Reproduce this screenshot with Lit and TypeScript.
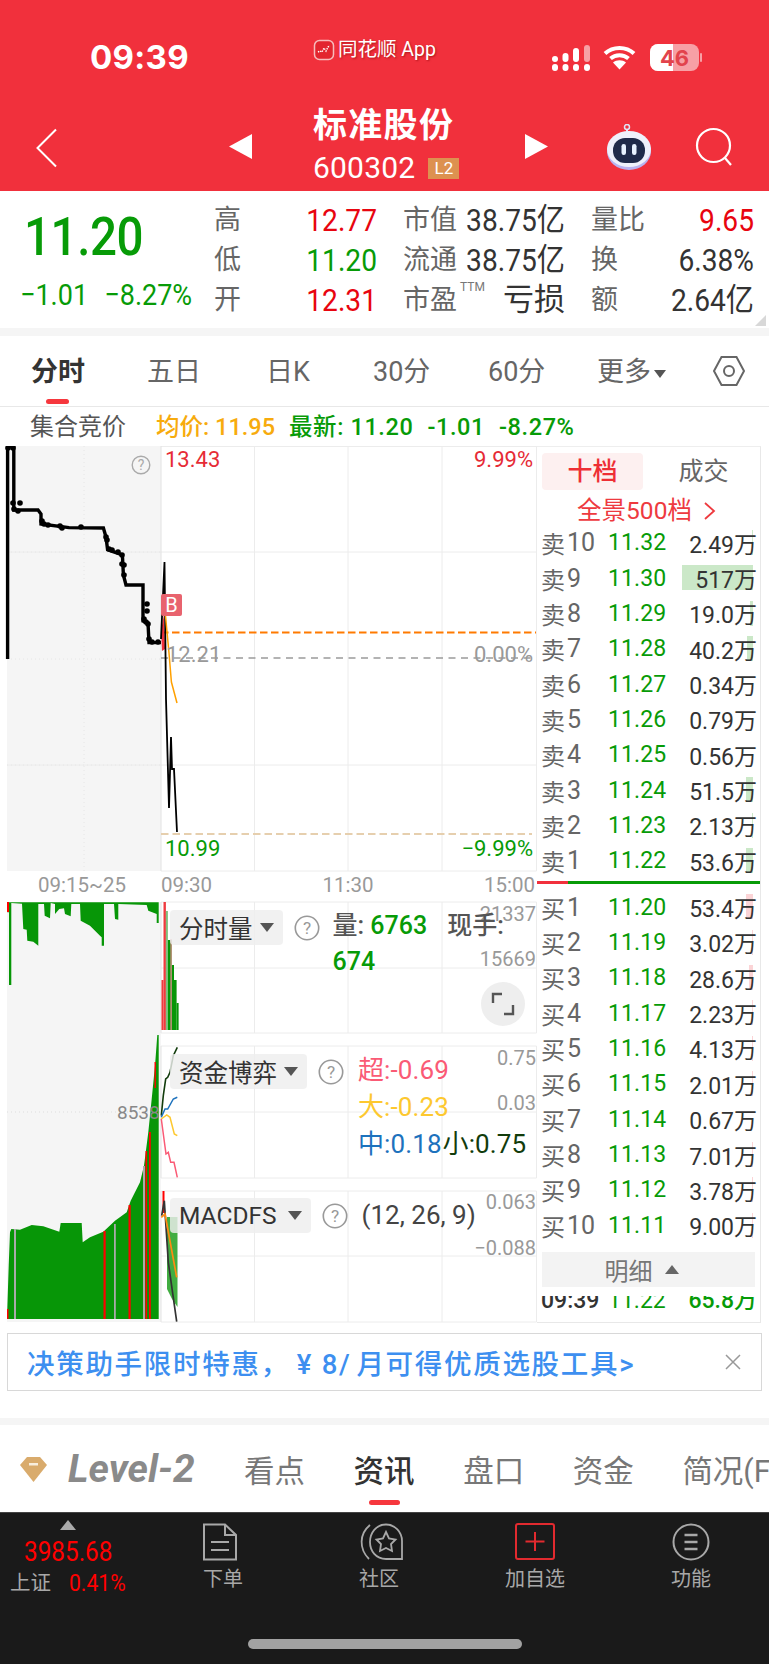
import { LitElement, html, css, svg } from "lit";
import { customElement } from "lit/decorators.js";

const pts = (a: number[][]) => a.map((p) => p.join(",")).join(" ");
const z7 = (x: number, y: number) => [+(x / 3).toFixed(1), +(y / 3 + 900).toFixed(1)];
const z7line = (a: number[][]) => pts(a.map((p) => z7(p[0], p[1])));

const hang = [[22,10],[22,40],[27,40],[27,258],[34,258],[34,12],[66,14],[70,90],[80,92],[82,125],[100,128],[115,140],[115,15],[132,15],[134,50],[150,58],[152,12],[165,15],[165,45],[178,30],[192,28],[195,45],[212,52],[214,15],[240,15],[242,65],[270,80],[300,110],[305,115],[305,140],[312,140],[312,15],[342,15],[345,60],[355,62],[355,15],[440,18],[445,35],[470,45],[470,72],[476,72],[476,10]];
const rise = [[22,1260],[22,1230],[26,1100],[30,1000],[34,990],[60,992],[95,978],[130,982],[178,998],[182,972],[245,972],[248,1030],[270,1015],[310,998],[345,965],[380,940],[392,905],[420,850],[432,800],[445,700],[455,600],[465,500],[472,408],[476,408],[476,1260]];
const blackAuction = [[7.6,660],[7.6,447],[13.8,447],[13.8,511],[38,511],[41,515],[41,525],[69,528.6],[103.4,529],[106,538],[107.6,550.7],[122.4,556],[123.4,576],[126,586],[143,586],[143,622],[148,624],[149,643.6],[161,643.6]];
const dots = [[8,449],[13,449],[13,504],[20,504],[14,510],[18,512],[42,522],[44,525],[48,526],[60,527],[62,529],[81,528],[106,538],[107,541],[109,550],[112,551],[118,553],[122,556],[122,565],[124,566],[124,576],[147,605],[147,612],[144,620],[146,623],[148,625],[149,640],[152,643],[158,643]];

const asks = [["10","11.32","2.49万",1.5],["9","11.30","517万",71],["8","11.29","19.0万",3],["7","11.28","40.2万",6],["6","11.27","0.34万",0],["5","11.26","0.79万",0],["4","11.25","0.56万",0],["3","11.24","51.5万",7],["2","11.23","2.13万",1],["1","11.22","53.6万",7]] as any[];
const bids = [["1","11.20","53.4万",7],["2","11.19","3.02万",1],["3","11.18","28.6万",4],["4","11.17","2.23万",1],["5","11.16","4.13万",1],["6","11.15","2.01万",1],["7","11.14","0.67万",0],["8","11.13","7.01万",1],["9","11.12","3.78万",1],["10","11.11","9.00万",1]] as any[];

const help = (s = 24) => html`<svg class="help" width=${s} height=${s} viewBox="0 0 24 24"><circle cx="12" cy="12" r="10.8" fill="none" stroke="#999" stroke-width="1.5"/><text x="12" y="17.5" text-anchor="middle" font-size="16" fill="#999" font-family="Roboto">?</text></svg>`;

@customElement("app-root")
export class AppRoot extends LitElement {
  static styles = css`
    :host { display: block; width: 769px; height: 1665px; overflow: hidden; background: #fff; font-family: Roboto, "Noto Sans CJK SC", sans-serif; color: #333; }
    svg { display: block; }
    .header { height: 191px; background: #f1303c; color: #fff; display: flex; flex-direction: column; }
    .status { height: 100px; display: flex; align-items: flex-start; }
    .time { margin: 37px 0 0 90px; width: 223px; font: 700 33px/40px Inter, Roboto, sans-serif; letter-spacing: 0.3px; }
    .appname { margin-top: 37px; width: 239px; display: flex; align-items: center; gap: 3px; font-size: 19.5px; line-height: 26px; text-shadow: 1px 1px 2px rgba(120,0,0,.55); }
    .sig { margin-top: 44px; display: flex; align-items: center; }
    .wifi { margin-left: 12px; }
    .battery { margin-left: 14px; }
    .nav { flex: 1; display: flex; align-items: flex-start; }
    .chev { margin: 28px 0 0 35px; }
    .tri-l { margin: 34px 0 0 170px; }
    .titlebox { margin-left: 61px; width: 212px; }
    .title { font-size: 34px; font-weight: 700; line-height: 48px; letter-spacing: 1.3px; margin-top: 1px; }
    .code { display: flex; align-items: center; gap: 13px; font-size: 30px; line-height: 34px; margin-top: 2px; letter-spacing: .2px; }
    .l2 { width: 31px; height: 21px; background: #dd9150; font-size: 17px; line-height: 21px; text-align: center; letter-spacing: 0; }
    .tri-r { margin: 34px 0 0 0; }
    .robot { margin: 24px 0 0 57px; }
    .search { margin: 27px 0 0 42px; }

    .stats { height: 137px; position: relative; display: flex; }
    .price { width: 214px; padding-left: 24px; box-sizing: border-box; }
    .big { font-size: 54px; line-height: 60px; color: #079b07; margin-top: 16px; transform: scaleX(.88); transform-origin: left; letter-spacing: -.5px; font-weight: 500; }
    .chg { display: flex; gap: 18px; margin: 11px 0 0 -4px; color: #079b07; font-size: 30px; line-height: 34px; transform: scaleX(.9); transform-origin: left; white-space: nowrap; }
    .grid { display: grid; grid-template-columns: 163px 26px 162px 26px 163px; grid-template-rows: repeat(3, 40px); margin-top: 9px; align-items: center; }
    .k { font-size: 27px; color: #666; white-space: nowrap; line-height: 40px; }
    .v { font-size: 32px; text-align: right; transform: scaleX(.88); transform-origin: right; line-height: 40px; white-space: nowrap; color: #333; }
    .red { color: #e8050f; } .grn { color: #079b07; }
    .lab { position: relative; }
    .ttm { font-size: 12px; color: #777; position: absolute; left: 57px; top: -3px; line-height: 20px; }
    .loss { font-size: 31px; color: #333; text-align: right; line-height: 38px; }
    .corner { position: absolute; right: 3px; bottom: 2px; width: 0; height: 0; border-left: 11px solid transparent; border-bottom: 11px solid #d8d8d8; }
    .strip { height: 8px; background: #f5f5f5; }
    .strip.b { height: 7px; }

    .tabs { height: 70px; border-bottom: 1px solid #e8e8e8; display: flex; position: relative; align-items: center; color: #666; font-size: 27px; }
    .tabs > div { position: absolute; top: 16px; line-height: 40px; white-space: nowrap; }
    .tabs .on { font-weight: 700; color: #333; }
    .ind { position: absolute; top: 63px; left: 46px; width: 23px; height: 5px; border-radius: 3px; background: #f6373d; }
    .more-caret { display: inline-block; margin-left: 3px; vertical-align: 3px; border: 6px solid transparent; border-top: 8px solid #555; border-bottom: 0; }
    .hex { position: absolute; left: 712px; top: 17px; }

    .quote { height: 39px; box-sizing: border-box; padding-top: 2px; display: flex; align-items: baseline; font-size: 23.5px; font-weight: 500; white-space: nowrap; line-height: 37px; }
    .quote .lbl { color: #555; font-size: 24px; font-weight: 400; margin: 0 30px 0 30px; }
    .quote .avg { color: #f7ab0d; margin-right: 14px; }
    .quote .last { color: #079b07; display: flex; align-items: baseline; gap: 14px; letter-spacing: .6px; }

    .main { display: flex; height: 878px; }
    .chart { width: 537px; position: relative; flex: none; }
    .chart svg.plot { position: absolute; left: 0; top: 0; }
    .indic { position: absolute; left: 170px; display: flex; align-items: flex-start; white-space: nowrap; }
    .pill { height: 35px; background: rgba(238,238,238,.82); border-radius: 4px; display: flex; align-items: center; gap: 7px; padding: 0 9px; font-size: 24.5px; color: #333; box-sizing: border-box; }
    .pill.m { gap: 11px; }
    .caret { display: inline-block; border: 7px solid transparent; border-top: 9px solid #555; border-bottom: 0; }
    .help { flex: none; }
    .indic .help { margin: 5px 13px 0 11px; }
    .read { font-size: 25px; line-height: 36px; font-weight: 500; }
    .vol { width: 195px; margin-top: -2px; white-space: normal; color: #555; display: flex; flex-wrap: wrap; column-gap: 20px; }
    .vol b { font-weight: 500; color: #079b07; }
    .fund { display: flex; flex-direction: column; font-size: 26px; line-height: 37px; margin-top: -2px; margin-left: 1px; letter-spacing: .1px; font-weight: 400; }
    .pk { color: #fa5a75; } .yl { color: #fdc82f; } .bl { color: #1d72bd; } .dg { color: #123c0c; margin-left: 1px; }
    .params { font-size: 26px; line-height: 35px; color: #444; margin-left: 1px; }
    .expand { position: absolute; left: 481px; top: 536px; width: 44px; height: 44px; border-radius: 50%; background: #eeeeee; display: flex; align-items: center; justify-content: center; }

    .book { width: 224px; box-sizing: border-box; border-right: 1px solid #e8e8e8; border-top: 1px solid #eee; border-bottom: 1px solid #e8e8e8; display: flex; flex-direction: column; flex: none; height: 877px; }
    .seg { display: flex; margin: 6px 0 0 5px; height: 37px; font-size: 25px; line-height: 37px; text-align: center; color: #666; }
    .seg .act { width: 101px; background: #fdf0f0; color: #ee2f35; border-radius: 4px; font-weight: 500; }
    .seg div:last-child { width: 101px; margin-left: 10px; }
    .pano { height: 35px; line-height: 44px; color: #ee3a3f; font-size: 24.5px; display: flex; justify-content: center; align-items: center; gap: 11px; padding: 6px 4px 0 0; box-sizing: border-box; }
    .row { height: 35.35px; position: relative; display: flex; align-items: center; font-size: 23px; white-space: nowrap; }
    .row .cn { padding-left: 4px; color: #666; font-size: 24px; width: 24px; box-sizing: content-box; flex: none; }
    .row .no { width: 43px; padding-left: 2px; box-sizing: border-box; color: #666; font-size: 25px; flex: none; }
    .row .px { width: 66px; color: #079b07; letter-spacing: .1px; }
    .row .qty { position: absolute; right: 3px; color: #333; z-index: 1; }
    .bar { position: absolute; right: 7px; top: 5px; height: 25px; }
    .bar.s { background: #cbe8c8; } .bar.b { background: #fbd4d6; }
    .split { height: 3px; margin: 3px 0 5px; background: #079b07; display: flex; }
    .split i { width: 31px; background: #f1303c; display: block; }
    .detail { margin: 9px 5px 0 5px; height: 35px; background: #f3f3f3; color: #777; font-size: 24px; display: flex; align-items: center; justify-content: center; gap: 12px; padding-right: 14px; }
    .detail i { border: 7px solid transparent; border-bottom: 9px solid #666; border-top: 0; display: block; }
    .clip { margin-top: 9px; height: 23px; overflow: hidden; position: relative; display: flex; font-size: 23px; line-height: 24px; white-space: nowrap; }
    .clip span { position: absolute; top: -7px; }
    .clip .t { left: 4px; color: #333; font-weight: 500; }
    .clip .p { left: 71px; color: #079b07; }
    .clip .q { right: 3px; color: #079b07; font-weight: 500; }

    .banner { margin: 9px 7px 0; height: 58px; box-sizing: border-box; border: 1px solid #d8d8d8; display: flex; align-items: center; justify-content: space-between; padding: 0 20px 0 19px; color: #3d8ff0; font-size: 27.5px; white-space: nowrap; font-weight: 500; letter-spacing: 1.7px; }
    .yen { margin: 0 5px 0 7px; }
    .gap { height: 27px; }
    .ltabs { height: 87px; position: relative; overflow: hidden; display: flex; align-items: center; font-size: 30.5px; color: #777; white-space: nowrap; }
    .diamond { margin-left: 20px; flex: none; }
    .lv { margin: 0 47px 0 21px; width: 129px; font-size: 39px; font-weight: 700; font-style: italic; color: #8a8a8a; flex: none; }
    .ltabs .t { width: 109.6px; flex: none; }
    .ltabs .on { color: #333; font-weight: 500; }
    .lind { position: absolute; left: 369px; top: 75px; width: 31px; height: 5px; border-radius: 3px; background: #f6373d; }

    .dock { height: 152px; background: #1a1a1a; border-top: 1px solid #444; box-sizing: border-box; position: relative; display: flex; color: #a8a8a8; }
    .idx { width: 145px; flex: none; display: flex; flex-direction: column; }
    .idx .up { margin: 7px 0 0 60px; width: 0; border: 8.5px solid transparent; border-bottom: 10px solid #aaa; border-top: 0; }
    .idx .n { color: #f00; font-size: 27px; line-height: 34px; margin: 5px 0 0 24px; transform: scaleX(.9); transform-origin: left; }
    .idx .s { display: flex; font-size: 20.5px; line-height: 30px; margin: -1px 0 0 10px; gap: 18px; }
    .idx .s b { color: #f00; font-weight: 400; font-size: 24px; transform: scaleX(.88); transform-origin: left; }
    .item { width: 156px; flex: none; display: flex; flex-direction: column; align-items: center; font-size: 20px; }
    .item svg { margin-top: 10px; }
    .item svg.doc { margin-right: 6px; }
    .item svg.com { margin-left: 5px; }
    .item span { line-height: 28px; margin-top: 4px; }
    .home { position: absolute; left: 248px; top: 126px; width: 274px; height: 10px; border-radius: 5px; background: #a2a2a2; }
  `;

  private plot() {
    const grid = "#ececec";
    const vs = [254.5, 348, 442];
    const panels = [[903, 969, 1034], [1047, 1113, 1179], [1192, 1257, 1323]];
    const label = (x: number, y: number, t: string, fill: string, anchor = "start", size = 22) =>
      svg`<text x=${x} y=${y} fill=${fill} text-anchor=${anchor} font-size=${size} font-family="Roboto, sans-serif">${t}</text>`;
    return svg`
      <svg class="plot" width="538" height="878" viewBox="0 447 538 878">
        <rect x="7" y="447" width="154" height="425" fill="#f5f5f5"/>
        <rect x="7" y="903" width="154" height="420" fill="#f5f5f5"/>
        <path d="M161 447.5H536.5V872H161M161 553H536.5M161 766H536.5M7 553H161M7 766H161" fill="none" stroke=${grid} stroke-width="1"/>
        <path d="M7 553H161M7 660H161M7 766H161M84 447V872" fill="none" stroke="#e6e6e6" stroke-dasharray="1 3"/>
        ${vs.map((x) => svg`<line x1=${x} x2=${x} y1="447" y2="872" stroke=${grid}/>`)}
        <line x1="161" x2="161" y1="447" y2="872" stroke="#e2e2e2"/>
        <line x1="536.5" x2="536.5" y1="447" y2="872" stroke=${grid}/>

        <line x1="161" x2="536" y1="659" y2="659" stroke="#9a9a9a" stroke-width="1.6" stroke-dasharray="7 5.5"/>
        <line x1="161" x2="536" y1="633.5" y2="633.5" stroke="#ff7a00" stroke-width="1.8" stroke-dasharray="7.5 3.5"/>
        <line x1="161" x2="532" y1="835" y2="835" stroke="#e6cfae" stroke-width="1.8" stroke-dasharray="7.5 4"/>

        <polyline points=${pts(blackAuction)} fill="none" stroke="#000" stroke-width="3.4"/>
        ${dots.map((d) => svg`<circle cx=${d[0]} cy=${d[1]} r="2.8" fill="#000"/>`)}
        <polygon points="161,632 164,615 165,650 162,652" fill="#f1303c"/>
        <polyline points="161,640 164.5,563 166,700 169,809 171,738 172,770 174,770 177,833" fill="none" stroke="#000" stroke-width="1.8"/>
        <polyline points="165.5,617 169,654 171.4,683 177,704" fill="none" stroke="#ffa000" stroke-width="1.5"/>
        <rect x="161" y="595" width="21" height="22" rx="2" fill="#e8636e"/>
        <text x="171.5" y="613" fill="#fff" text-anchor="middle" font-size="20" font-family="Roboto, sans-serif">B</text>

        ${label(165, 468, "13.43", "#e62b36")}
        ${label(533, 468, "9.99%", "#e62b36", "end")}
        ${label(166, 663, "12.21", "#999")}
        ${label(533, 663, "0.00%", "#999", "end")}
        ${label(165, 857, "10.99", "#079b07")}
        ${label(533, 857, "−9.99%", "#079b07", "end")}
        <g transform="translate(131 456)"><circle cx="10" cy="10" r="8.8" fill="none" stroke="#aaa" stroke-width="1.4"/><text x="10" y="15" text-anchor="middle" font-size="14" fill="#aaa" font-family="Roboto">?</text></g>

        ${label(38, 893, "09:15~25", "#999", "start", 20.5)}
        ${label(161, 893, "09:30", "#999", "start", 20.5)}
        ${label(348, 893, "11:30", "#999", "middle", 20.5)}
        ${label(535, 893, "15:00", "#999", "end", 20.5)}

        ${panels.map((p) => svg`
          <path d="M161 ${p[0]}H536.5V${p[2]}H161M161 ${p[1]}H536.5" fill="none" stroke=${grid}/>
          <line x1="161" x2="161" y1=${p[0]} y2=${p[2]} stroke="#e4e4e4"/>
          ${vs.map((x) => svg`<line x1=${x} x2=${x} y1=${p[0]} y2=${p[2]} stroke=${grid}/>`)}
        `)}
        <path d="M7 1113H161" stroke="#ddd" stroke-dasharray="1 3"/>

        <polygon points=${z7line(hang)} fill="#079607"/>
        <polygon points=${z7line(rise)} fill="#079607"/>
        <rect x="7" y="903" width="2" height="10" fill="#f00"/>
        <rect x="14" y="1230" width="2" height="90" fill="#aaa"/>
        <rect x="114" y="1225" width="1.8" height="95" fill="#aaa"/>
        <rect x="143" y="1167" width="2" height="153" fill="#aaa"/>
        <rect x="103.5" y="1232" width="2.2" height="88" fill="#f00"/>
        <rect x="128.5" y="1206" width="2.2" height="114" fill="#f00"/>
        <rect x="145.5" y="1152" width="1.6" height="168" fill="#f00"/>
        <rect x="149" y="1133" width="1.8" height="187" fill="#f00"/>
        <rect x="154.5" y="1063" width="1.4" height="26" fill="#f00"/>
        <rect x="7" y="1310" width="1.5" height="10" fill="#f00"/>

        <rect x="161.5" y="981" width="2" height="50" fill="#ef3a3f"/>
        <rect x="163.5" y="903" width="2.4" height="128" fill="#ef3a3f"/>
        <rect x="165.9" y="912" width="2" height="119" fill="#7fc07f"/>
        <rect x="167.9" y="941" width="3.8" height="90" fill="#079607"/>
        <rect x="171.7" y="966" width="2.3" height="65" fill="#079607"/>
        <rect x="170.4" y="940" width="1.3" height="91" fill="#d88"/>
        <rect x="174" y="981" width="2.6" height="50" fill="#079607"/>
        <rect x="176.6" y="1004" width="2" height="27" fill="#079607"/>

        <polyline points=${z7line([[484,650],[490,590],[497,540],[503,535],[510,520],[520,470],[532,445]])} fill="none" stroke="#123c0c" stroke-width="1.6"/>
        <polyline points=${z7line([[484,655],[495,630],[503,630],[520,600],[532,595]])} fill="none" stroke="#1d72bd" stroke-width="1.5"/>
        <polyline points=${z7line([[484,660],[500,648],[510,655],[523,705],[532,710]])} fill="none" stroke="#fdc82f" stroke-width="1.5"/>
        <polyline points=${z7line([[484,660],[498,765],[505,760],[512,790],[522,790],[532,835]])} fill="none" stroke="#fa5a75" stroke-width="1.5"/>

        <rect x="162.5" y="1192" width="2" height="22" fill="#f00"/>
        <polygon points="167,1218 177.5,1218 177.5,1308 172,1300 167,1290" fill="#41ad41"/>
        <polyline points=${z7line([[485,950],[493,905],[505,1090],[530,1268]])} fill="none" stroke="#333" stroke-width="1.7"/>
        <polyline points=${z7line([[484,955],[495,945],[530,1135]])} fill="none" stroke="#ff8a12" stroke-width="1.7"/>

        ${label(536, 922, "21337", "#999", "end", 20)}
        ${label(536, 967, "15669", "#999", "end", 20)}
        ${label(536, 1066, "0.75", "#999", "end", 20)}
        ${label(536, 1111, "0.03", "#999", "end", 20)}
        ${label(536, 1210, "0.063", "#999", "end", 20)}
        ${label(536, 1256, "−0.088", "#999", "end", 20)}
        ${label(117, 1120, "8538", "#888", "start", 19)}
      </svg>`;
  }

  private row(r: any[], cn: string) {
    const cls = cn === "卖" ? "s" : "b";
    return html`<div class="row">
      ${r[3] ? html`<i class="bar ${cls}" style="width:${r[3]}px"></i>` : ""}
      <span class="cn">${cn}</span><span class="no">${r[0]}</span><span class="px">${r[1]}</span><span class="qty">${r[2]}</span>
    </div>`;
  }

  render() {
    return html`
      <div class="header">
        <div class="status">
          <div class="time">09:39</div>
          <div class="appname">
            <svg width="22" height="22" viewBox="0 0 22 22"><rect x="1.5" y="1.5" width="19" height="19" rx="5" fill="#e3252f" stroke="#f6bcbc" stroke-width="1.5"/><path d="M5 13l2-1 2 1 2-4 2 3 2-4 2-1" fill="none" stroke="#fff" stroke-width="1.4" stroke-dasharray="1.4 1"/></svg>
            同花顺 App
          </div>
          <div class="sig">
            <svg width="39" height="26" viewBox="0 0 39 26" fill="#fff"><rect x="0" y="19" width="6" height="7" rx="3"/><rect x="10.5" y="19" width="6" height="7" rx="3"/><rect x="21" y="19" width="6" height="7" rx="3"/><rect x="32" y="19" width="6" height="7" rx="3"/><rect x="0" y="11" width="6" height="6" rx="3"/><rect x="10.5" y="8" width="6" height="9" rx="3"/><rect x="21" y="3" width="6" height="14" rx="3"/><rect x="32" y="0" width="6" height="17" rx="3" fill="#f7a0a5"/></svg>
            <svg class="wifi" width="33" height="25" viewBox="0 0 33 25"><path d="M2 8.5C10 1 23 1 31 8.5M7.5 13.5C12.5 9 20.5 9 25.5 13.5" fill="none" stroke="#fff" stroke-width="4"/><path d="M16.5 24.5L10 17.5C13.5 14.5 19.5 14.5 23 17.5Z" fill="#fff"/></svg>
            <svg class="battery" width="52" height="27" viewBox="0 0 52 27"><rect x="0" y="0" width="49" height="27" rx="8" fill="#f7a0a5"/><path d="M8 0H23V27H8A8 8 0 0 1 0 19V8A8 8 0 0 1 8 0Z" fill="#fff"/><rect x="50" y="9" width="2" height="9" rx="1" fill="#f7a0a5"/><text x="24.5" y="21.5" text-anchor="middle" font-size="22" font-weight="700" fill="#e2434c" font-family="Inter, Roboto, sans-serif">46</text></svg>
          </div>
        </div>
        <div class="nav">
          <svg class="chev" width="24" height="40" viewBox="0 0 24 40"><path d="M21 1.5L2.5 20L21 38.5" fill="none" stroke="#fff" stroke-width="2"/></svg>
          <svg class="tri-l" width="23" height="25" viewBox="0 0 23 25"><path d="M23 0V25L0 12.5Z" fill="#fff"/></svg>
          <div class="titlebox">
            <div class="title">标准股份</div>
            <div class="code">600302<div class="l2">L2</div></div>
          </div>
          <svg class="tri-r" width="23" height="25" viewBox="0 0 23 25"><path d="M0 0V25L23 12.5Z" fill="#fff"/></svg>
          <svg class="robot" width="48" height="46" viewBox="0 0 48 46"><circle cx="22" cy="3" r="2.5" fill="none" stroke="#dfe3f5" stroke-width="1.5"/><path d="M22 5V9" stroke="#dfe3f5" stroke-width="2"/><ellipse cx="24" cy="27" rx="22" ry="19" fill="#b9b3f0"/><ellipse cx="24" cy="25" rx="22" ry="18" fill="#eef0fb"/><rect x="8" y="14" width="32" height="25" rx="12" fill="#1f2a4a"/><rect x="16.5" y="20" width="4.5" height="11" rx="2.2" fill="#e8f2ff"/><rect x="27" y="20" width="4.5" height="11" rx="2.2" fill="#e8f2ff"/></svg>
          <svg class="search" width="40" height="40" viewBox="0 0 40 40"><circle cx="18.5" cy="18.5" r="16.5" fill="none" stroke="#fff" stroke-width="2.2"/><path d="M30 31l6 7" stroke="#fff" stroke-width="2.2"/></svg>
        </div>
      </div>

      <div class="stats">
        <div class="price">
          <div class="big">11.20</div>
          <div class="chg"><span>−1.01</span><span>−8.27%</span></div>
        </div>
        <div class="grid">
          <div class="k" style="grid-column:1;grid-row:1">高</div><div class="v red" style="grid-column:1;grid-row:1">12.77</div>
          <div class="k" style="grid-column:3;grid-row:1">市值</div><div class="v" style="grid-column:3;grid-row:1">38.75亿</div>
          <div class="k" style="grid-column:5;grid-row:1">量比</div><div class="v red" style="grid-column:5;grid-row:1">9.65</div>

          <div class="k" style="grid-column:1;grid-row:2">低</div><div class="v grn" style="grid-column:1;grid-row:2">11.20</div>
          <div class="k" style="grid-column:3;grid-row:2">流通</div><div class="v" style="grid-column:3;grid-row:2">38.75亿</div>
          <div class="k" style="grid-column:5;grid-row:2">换</div><div class="v" style="grid-column:5;grid-row:2">6.38%</div>

          <div class="k" style="grid-column:1;grid-row:3">开</div><div class="v red" style="grid-column:1;grid-row:3">12.31</div>
          <div class="k lab" style="grid-column:3;grid-row:3">市盈<span class="ttm">TTM</span></div><div class="loss" style="grid-column:3;grid-row:3">亏损</div>
          <div class="k" style="grid-column:5;grid-row:3">额</div><div class="v" style="grid-column:5;grid-row:3">2.64亿</div>
        </div>
        <div class="corner"></div>
      </div>
      <div class="strip"></div>

      <div class="tabs">
        <div class="on" style="left:31px">分时</div>
        <div style="left:147px">五日</div>
        <div style="left:266px">日K</div>
        <div style="left:373px">30分</div>
        <div style="left:488px">60分</div>
        <div style="left:597px">更多<i class="more-caret"></i></div>
        <svg class="hex" width="34" height="36" viewBox="0 0 34 36"><path d="M9.5 4H24.5L32 18L24.5 32H9.5L2 18Z" fill="none" stroke="#666" stroke-width="2"/><circle cx="17" cy="18" r="5" fill="none" stroke="#666" stroke-width="2"/></svg>
        <span class="ind"></span>
      </div>

      <div class="quote">
        <span class="lbl">集合竞价</span>
        <span class="avg">均价: 11.95</span>
        <span class="last"><span>最新: 11.20</span><span>-1.01</span><span>-8.27%</span></span>
      </div>

      <div class="main">
        <div class="chart">
          ${this.plot()}
          <div class="indic" style="top:464px">
            <div class="pill">分时量<i class="caret"></i></div>${help(26)}
            <div class="read vol"><span>量: <b>6763</b></span><span>现手:</span><b>674</b></div>
          </div>
          <div class="indic" style="top:608px">
            <div class="pill">资金博弈<i class="caret"></i></div>${help(26)}
            <div class="read fund">
              <span class="pk">超:-0.69</span><span class="yl">大:-0.23</span><span><span class="bl">中:0.18</span><span class="dg">小:0.75</span></span>
            </div>
          </div>
          <div class="indic" style="top:752px">
            <div class="pill m">MACDFS<i class="caret"></i></div>${help(26)}
            <div class="params">(12, 26, 9)</div>
          </div>
          <div class="expand"><svg width="24" height="24" viewBox="0 0 24 24"><path d="M2 11V2H11M22 13V22H13" fill="none" stroke="#555" stroke-width="2.4"/></svg></div>
        </div>

        <div class="book">
          <div class="seg"><div class="act">十档</div><div>成交</div></div>
          <div class="pano">全景500档 <svg width="13" height="20" viewBox="0 0 13 20"><path d="M2 2L11 10L2 18" fill="none" stroke="#ee3a3f" stroke-width="1.8"/></svg></div>
          ${asks.map((r) => this.row(r, "卖"))}
          <div class="split"><i></i></div>
          ${bids.map((r) => this.row(r, "买"))}
          <div class="detail">明细<i></i></div>
          <div class="clip"><span class="t">09:39</span><span class="p">11.22</span><span class="q">65.8万</span></div>
        </div>
      </div>

      <div class="banner"><span>决策助手限时特惠，<span class="yen">¥ 8/</span>月可得优质选股工具&gt;</span>
        <svg width="16" height="16" viewBox="0 0 16 16"><path d="M1 1L15 15M15 1L1 15" stroke="#999" stroke-width="1.5"/></svg>
      </div>
      <div class="gap"></div>
      <div class="strip b"></div>
      <div class="ltabs">
        <svg class="diamond" width="27" height="26" viewBox="0 0 27 26"><path d="M7 1H20L27 9L13.5 26L0 9Z" fill="#d9ab6c"/><rect x="9" y="7" width="9" height="2.5" fill="#f8eedd"/></svg>
        <span class="lv">Level-2</span>
        <span class="t">看点</span><span class="t on">资讯</span><span class="t">盘口</span><span class="t">资金</span><span class="t">简况(F10)</span>
        <i class="lind"></i>
      </div>

      <div class="dock">
        <div class="idx">
          <i class="up"></i>
          <div class="n">3985.68</div>
          <div class="s"><span>上证</span><b>0.41%</b></div>
        </div>
        <div class="item">
          <svg class="doc" width="36" height="38" viewBox="0 0 36 38"><path d="M2 1.5H23L34 12V36.5H2Z M23 1.5V12H34 M9 19H27 M9 27H27" fill="none" stroke="#a8a8a8" stroke-width="2"/></svg>
          <span>下单</span>
        </div>
        <div class="item">
          <svg class="com" width="44" height="38" viewBox="0 0 44 38"><path d="M9 36C-1 26 -1 11 10 2" fill="none" stroke="#a8a8a8" stroke-width="1.8"/><path d="M26 1.5C35 1.5 42 9 42 18V36H26C16 36 10 28 10 19S16 1.5 26 1.5Z" fill="none" stroke="#a8a8a8" stroke-width="1.8"/><path d="M26 9L29 15.5L35.5 16.5L31 21L32 28L26 25L20 28L21 21L16.5 16.5L23 15.5Z" fill="none" stroke="#a8a8a8" stroke-width="1.8"/></svg>
          <span>社区</span>
        </div>
        <div class="item">
          <svg width="40" height="38" viewBox="0 0 40 38"><rect x="1" y="1" width="38" height="35" rx="2" fill="none" stroke="#e22a2f" stroke-width="2"/><path d="M20 9V28M10.5 18.5H29.5" stroke="#e22a2f" stroke-width="2"/></svg>
          <span>加自选</span>
        </div>
        <div class="item">
          <svg width="38" height="38" viewBox="0 0 38 38"><circle cx="19" cy="19" r="17.5" fill="none" stroke="#a8a8a8" stroke-width="2"/><path d="M12.5 12H25.5M12.5 19H25.5M12.5 26H25.5" stroke="#a8a8a8" stroke-width="2.4"/></svg>
          <span>功能</span>
        </div>
        <div class="home"></div>
      </div>
    `;
  }
}
